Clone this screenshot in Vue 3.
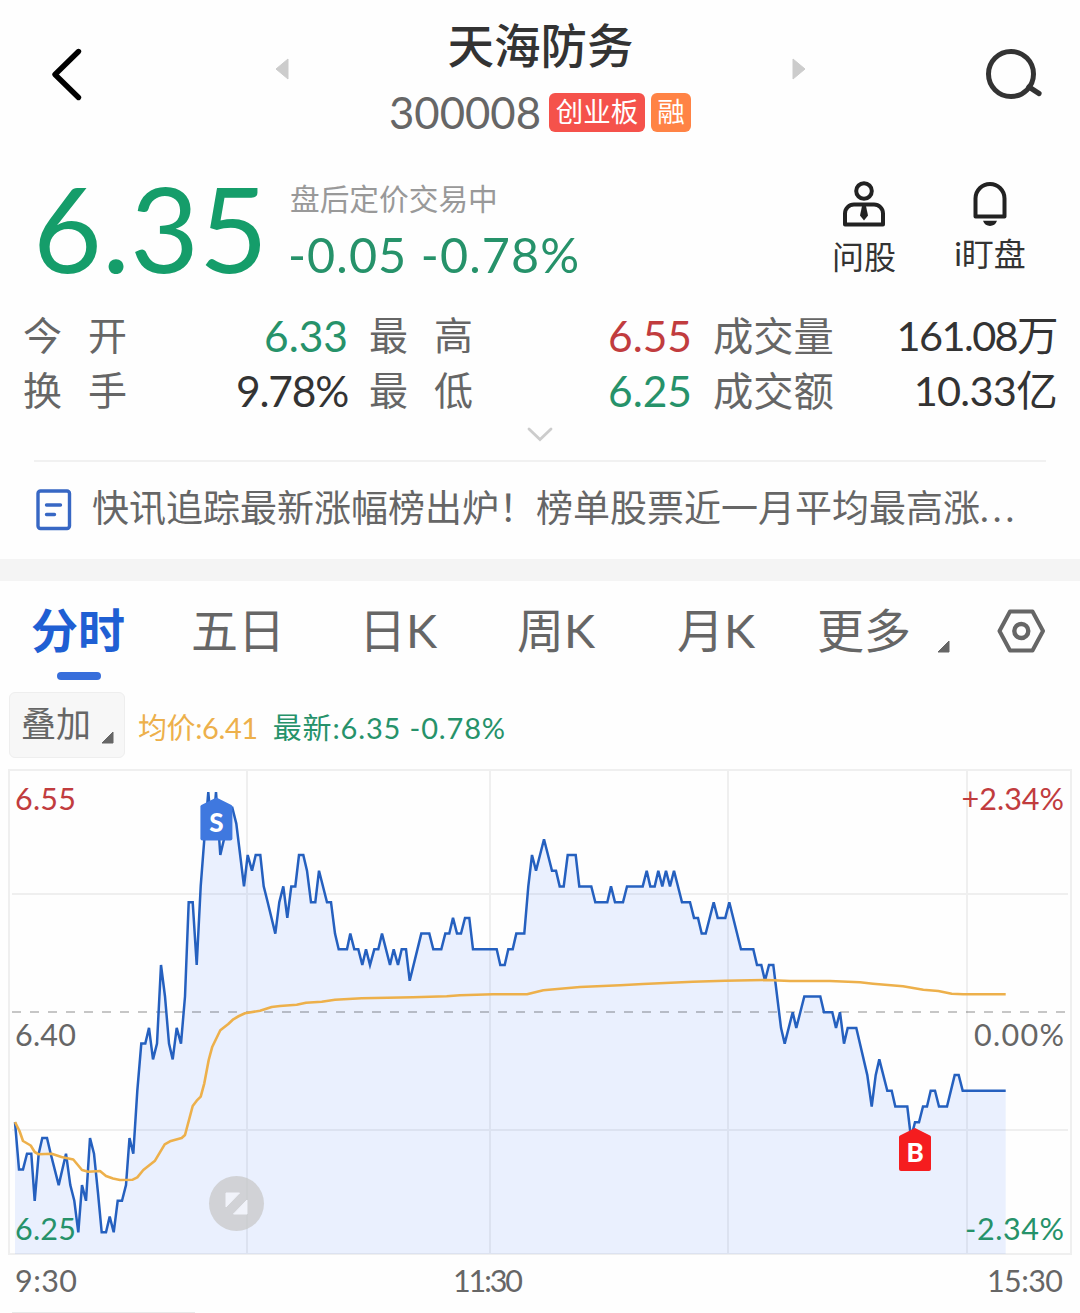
<template>
  <div class="stock-page">
    <header class="header">
      <svg class="icon-back" width="36" height="60" viewBox="0 0 36 60">
        <path d="M31.500 6.500 8 29.500l23.500 23" fill="none" stroke="#000" stroke-width="5.400" stroke-linecap="round" stroke-linejoin="round" />
      </svg>
      <svg class="icon-prev" width="14" height="22" viewBox="0 0 14 22">
        <path d="M13 1v20L1 11z" fill="#ccc" stroke="#ccc" stroke-linejoin="round" />
      </svg>
      <div class="title">
        <h1 class="name">天海防务</h1>
        <div class="code-row">
          <span class="code">300008</span>
          <span class="tag red">创业板</span>
          <span class="tag orange">融</span>
        </div>
      </div>
      <svg class="icon-next" width="14" height="22" viewBox="0 0 14 22">
        <path d="M1 1v20l12-10z" fill="#ccc" stroke="#ccc" stroke-linejoin="round" />
      </svg>
      <svg class="icon-search" width="60" height="54" viewBox="0 0 60 54">
        <circle cx="27" cy="27" r="22.500" fill="none" stroke="#333" stroke-width="5" />
        <path d="M45 40 55 46.500" stroke="#333" stroke-width="5.200" stroke-linecap="round" />
      </svg>
    </header>

    <section class="quote">
      <div class="price">6.35</div>
      <div class="change">
        <div class="status">盘后定价交易中</div>
        <div class="diff">-0.05 -0.78%</div>
      </div>
      <div class="action">
        <svg width="44" height="46" viewBox="0 0 44 46" fill="none" stroke="#222" stroke-width="4">
          <circle cx="22" cy="10" r="7.800" />
          <path d="M3 43.500V32.500a9 9 0 0 1 9-9h20a9 9 0 0 1 9 9v11z" stroke-linejoin="round" />
          <path d="M20 25h4l2 9.500-4 5-4-5z" fill="#222" stroke="none" />
        </svg>
        <span>问股</span>
      </div>
      <div class="action watch">
        <svg width="44" height="46" viewBox="0 0 44 46" fill="none" stroke="#222" stroke-width="4">
          <path d="M7.500 35.500V17.500a14.500 14.500 0 0 1 29 0v18z" stroke-linejoin="round" />
          <path d="M15 39.800h14c-1 3.400-4 5.200-7 5.200s-6-1.800-7-5.200z" fill="#222" stroke="none" />
        </svg>
        <span>i盯盘</span>
      </div>
    </section>

    <section class="stats">
      <div v-for="s in stats" :key="s.label" class="stat">
        <span class="stat-label" :class="{ wide: s.label.length === 2 }">{{ s.label }}</span>
        <span class="stat-value" :class="s.tone">{{ s.value }}</span>
      </div>
    </section>

    <div class="expand">
      <svg width="28" height="16" viewBox="0 0 28 16">
        <path d="M3 3l11 10.500L25 3" fill="none" stroke="#ccc" stroke-width="2.800" stroke-linecap="round" />
      </svg>
    </div>

    <div class="news">
      <svg width="36" height="42" viewBox="0 0 36 42" fill="none" stroke="#3767c4" stroke-width="3.400" stroke-linecap="round">
        <rect x="2" y="2" width="31.500" height="37.500" rx="2.500" />
        <path d="M10.500 16h14M10.500 25.500h8" />
      </svg>
      <p>快讯追踪最新涨幅榜出炉！榜单股票近一月平均最高涨<span class="dots">...</span></p>
    </div>

    <nav class="tabs">
      <span v-for="(tab, i) in tabs" :key="tab" class="tab" :class="{ active: i === 0 }">{{ tab }}</span>
      <svg class="tab-corner" width="13" height="13" viewBox="0 0 13 13">
        <path d="M12 1v11H1z" fill="#666" stroke="#666" stroke-linejoin="round" />
      </svg>
      <svg class="tab-setting" width="48" height="46" viewBox="0 0 48 46" fill="none" stroke="#666" stroke-linejoin="round">
        <path d="M13 3.500h22.500L46 23 35.500 42.500H13L2.500 23z" stroke-width="4" />
        <circle cx="24.300" cy="23" r="7" stroke-width="4.400" />
      </svg>
    </nav>

    <div class="legend">
      <div class="overlay-btn">
        <span>叠加</span>
        <svg width="13" height="13" viewBox="0 0 13 13">
          <path d="M12 1v11H1z" fill="#666" stroke="#666" stroke-linejoin="round" />
        </svg>
      </div>
      <span class="legend-avg">均价:6.41</span>
      <span class="legend-last">最新:6.35 -0.78%</span>
    </div>

    <svg class="chart" width="1080" height="553" viewBox="0 760 1080 553">
      <g fill="none" stroke="#efefef" stroke-width="2">
        <rect x="9" y="770" width="1062" height="484" />
        <path d="M12 894H1068M12 1130H1068" />
        <path v-for="x in [247, 490, 728, 967]" :key="x" :d="`M${x} 770V1254`" />
      </g>
      <path :d="areaPath" fill="#2b6bff" fill-opacity="0.095" />
      <path d="M12 1012H1065" stroke="#000" stroke-opacity="0.220" stroke-width="2" stroke-dasharray="9 9" />
      <polyline :points="pricePoints" fill="none" stroke="#2560bf" stroke-width="2.500" />
      <polyline :points="avgLine" fill="none" stroke="#edb04b" stroke-width="2.600" stroke-linejoin="round" />

      <text x="15" y="810" class="axis up" textLength="61">6.55</text>
      <text x="15" y="1046" class="axis" textLength="61">6.40</text>
      <text x="15" y="1240" class="axis down" textLength="61">6.25</text>
      <text x="1064" y="810" class="axis up" text-anchor="end">+2.34%</text>
      <text x="1064" y="1046" class="axis" text-anchor="end" textLength="90">0.00%</text>
      <text x="1064" y="1240" class="axis down" text-anchor="end" textLength="99">-2.34%</text>
      <text x="15" y="1292" class="axis" textLength="62">9:30</text>
      <text x="453" y="1292" class="axis" textLength="70">11:30</text>
      <text x="987" y="1292" class="axis" textLength="76">15:30</text>

      <g v-for="m in marks" :key="m.text" :transform="`translate(${m.x} ${m.y})`">
        <path d="M0 0l15 7.500q1 .5 1 1.500v32q0 2-2 2h-28q-2 0-2-2V9q0-1 1-1.500z" :fill="m.color" />
        <text x="0" y="34" class="mark">{{ m.text }}</text>
      </g>

      <circle cx="236.500" cy="1203.500" r="27.500" fill="#c8c8c8" fill-opacity="0.750" />
      <path d="M226 1193h13.500l-13.500 14zM247 1200v14h-13.500z" fill="#f1f3fa" stroke="#f1f3fa" stroke-linejoin="round" />
      <path d="M12 1312.500H195" stroke="#e8e8e8" />
    </svg>
  </div>
</template>

<script setup>
import { computed } from 'vue';

const stats = [
  { label: '今开', value: '6.33', tone: 'down' },
  { label: '最高', value: '6.55', tone: 'up' },
  { label: '成交量', value: '161.08万', tone: 'volume' },
  { label: '换手', value: '9.78%', tone: 'rate' },
  { label: '最低', value: '6.25', tone: 'down' },
  { label: '成交额', value: '10.33亿', tone: 'amount' },
];

const tabs = ['分时', '五日', '日K', '周K', '月K', '更多'];

const marks = [
  { text: 'S', x: 216.4, y: 797.5, color: '#3f78df' },
  { text: 'B', x: 915, y: 1128, color: '#f51d1f' },
];

// [x, ticks away from the 6.40 close]
const prices = [
  [15, -7], [19, -10], [23, -10], [27, -9], [31.3, -9], [34.7, -12], [38.7, -9], [42.3, -8], [47, -8],
  [50.7, -9], [58.7, -11], [66, -9], [70.3, -11], [74.3, -12], [78.3, -14], [82, -11], [86, -12], [90, -8],
  [94, -9], [98, -11.5], [101.7, -14], [106, -14], [109.7, -13], [113.7, -14], [117.7, -12], [122, -12],
  [126, -11], [129.5, -8], [133.3, -9], [137.3, -5], [141.3, -2], [145.3, -2], [149, -1], [153, -3],
  [157, -2], [161, 3], [165, 1], [169, -2], [172.7, -3], [176.7, -1], [181, -2], [185, 1], [188.7, 7],
  [192.7, 7], [196.7, 3], [200.7, 8], [204.3, 11], [208.3, 14], [212.3, 11], [216, 14], [220.3, 10],
  [224, 11], [228.3, 13], [232.3, 13], [236.3, 12], [244, 8], [247.7, 10], [252, 9], [255.7, 10],
  [260.3, 10], [263.7, 8], [267.7, 7], [275.3, 5], [279.3, 7], [283.3, 8], [287.3, 6], [291.3, 8],
  [295.3, 8], [299, 10], [303.3, 10], [307, 9], [311, 7], [315.3, 7], [319, 9], [327, 7], [331, 7],
  [335, 5], [338.7, 4], [347, 4], [350.3, 5], [354.3, 4], [358.3, 4], [362.3, 3], [366, 4], [370, 3],
  [374.3, 4], [378.3, 4], [382, 5], [390, 3], [393.7, 4], [398, 3], [401.7, 4], [406, 4], [409.7, 2],
  [421.3, 5], [429.3, 5], [433.3, 4], [441.3, 4], [445.3, 5], [449.3, 5], [453, 6], [457, 5], [461, 5],
  [465, 6], [469.3, 6], [473, 4], [496.7, 4], [500.3, 3], [504.7, 3], [508.3, 4], [512.7, 4], [516.3, 5],
  [524.3, 5], [528.3, 8], [532, 10], [536, 9], [544, 11], [552, 9], [556, 9], [559.7, 8], [563.7, 8],
  [567.7, 10], [575.7, 10], [579.3, 8], [591.3, 8], [595.3, 7], [607.3, 7], [611, 8], [615, 7], [623, 7],
  [627, 8], [642.7, 8], [646.7, 9], [650.3, 8], [654.7, 8], [658.3, 9], [662.3, 8], [666, 9], [670, 8],
  [674, 9], [682, 7], [690, 7], [694, 6], [698, 6], [701.7, 5], [705.7, 5], [713.7, 7], [717.7, 6],
  [725.3, 6], [729.3, 7], [741, 4], [753.3, 4], [757, 3], [761.3, 3], [765, 2], [769, 3], [773.3, 3],
  [781, -1], [784.7, -2], [792.7, 0], [796.3, -1], [804.3, 1], [820.3, 1], [824, 0], [832.3, 0],
  [836, -1], [840, 0], [844, -2], [847.7, -1], [856.3, -1], [867.3, -4], [871.7, -6], [875.7, -4],
  [879.3, -3], [887.3, -5], [891.7, -5], [895.3, -6], [907.3, -6], [911, -8], [915, -7], [919, -7],
  [923, -6], [927, -6], [930.7, -5], [935, -5], [939, -6], [947, -6], [954.7, -4], [958.7, -4],
  [962.7, -5], [1005.7, -5],
];

const avgLine = `15,1122 19.5,1131 23,1141 30.7,1145.5 34.7,1152 38.7,1154.3 51.7,1153.7 61.5,1157 73.3,1159.5
  82,1170 88.3,1171.7 100,1171 106,1176 113,1178.5 120,1180 132.7,1179.7 137.3,1177.3 143.3,1170 155,1160.7
  164.7,1144.3 170,1141.3 181.7,1138 185,1135 192.7,1106 196.7,1100.7 200.7,1096.7 204.3,1083.3 208.7,1060
  212.3,1046.7 220.3,1030.3 228.3,1024 233.3,1019.3 239,1016 245,1013.3 260,1010.7 271.7,1007 280,1006
  296.7,1004.7 306,1002.7 321.7,1001.7 335,999.7 361.7,998.3 413,997.3 446.7,996.3 460,995.3 493,994.3
  527,994.3 543.3,990.3 580,987 620,985.3 643,984 693,981.7 725,980.7 766.700,980 790,981 830,981 860,982.3
  873,983.7 903,986.3 923.3,989.7 938.3,991 951.7,993.7 963.3,994.3 1005.7,994.3`;

const pricePoints = computed(() =>
  prices.map(([x, ticks]) => `${x},${(1012.2 - ticks * 15.72).toFixed(1)}`).join(' ')
);

const areaPath = computed(() => `M15,1254 L${pricePoints.value} L1005.7,1254 Z`);
</script>

<style>
body {
  background: #fefefe;
}
</style>

<style scoped>
.stock-page {
  width: 1080px;
  height: 1313px;
  overflow: hidden;
  font-family: Lato, 'Noto Sans CJK SC', sans-serif;
  color: #333;
  background: #fefefe;
}

svg {
  display: block;
  flex: none;
}

.header {
  display: flex;
  align-items: flex-start;
  height: 160px;
}

.icon-back {
  margin: 45px 0 0 47px;
}

.icon-prev {
  margin: 58px 0 0 192px;
}

.title {
  width: 303px;
  margin-left: 100px;
}

.name {
  margin: 0;
  padding-top: 15px;
  font-size: 46.500px;
  line-height: 60px;
  font-weight: 500;
  text-align: center;
  color: #333;
  white-space: nowrap;
}

.code-row {
  display: flex;
  align-items: center;
  margin-top: 18px;
  height: 39px;
}

.code {
  width: 160px;
  font-size: 43.700px;
  line-height: 39px;
  color: #666;
}

.tag {
  width: 96px;
  height: 39px;
  border-radius: 6px;
  font-size: 27.500px;
  line-height: 38px;
  text-align: center;
  color: #fff;
}

.tag.red {
  background: #f5524b;
}

.tag.orange {
  width: 40px;
  margin-left: 6px;
  background: #ff8345;
}

.icon-next {
  margin: 58px 0 0 100px;
}

.icon-search {
  margin: 47px 0 0 178px;
}

.quote {
  display: flex;
  height: 148px;
}

.price {
  width: 257px;
  padding-left: 33px;
  font-size: 119px;
  line-height: 135px;
  color: #159d6a;
}

.change {
  width: 541px;
}

.status {
  margin-top: 22px;
  font-size: 29.700px;
  line-height: 34px;
  color: #999;
}

.diff {
  margin-top: 8px;
  margin-left: -2px;
  font-size: 48.500px;
  line-height: 60px;
  letter-spacing: 1.100px;
  color: #26926a;
}

.action {
  display: flex;
  flex-direction: column;
  align-items: center;
  width: 66px;
  padding-top: 21px;
  font-size: 32px;
  line-height: 36px;
  white-space: nowrap;
}

.action span {
  margin-top: 12px;
}

.watch {
  width: 80px;
  margin-left: 53px;
}

.watch span {
  margin-top: 9px;
}

.stats {
  display: grid;
  grid-template-columns: 325px 323px 344px;
  column-gap: 21px;
  padding-left: 23px;
}

.stat {
  display: flex;
  justify-content: space-between;
  height: 55px;
  line-height: 55px;
  white-space: nowrap;
}

.stat-label {
  font-size: 40.300px;
  color: #666;
}

.stat-label.wide {
  font-size: 39px;
  letter-spacing: 26px;
}

.stat-value {
  font-size: 42.500px;
}

.stat-value.rate {
  letter-spacing: -1.200px;
}

.stat-value.volume {
  font-size: 41.500px;
  letter-spacing: -1.600px;
}

.stat-value.amount {
  font-size: 41.500px;
  letter-spacing: -0.700px;
}

.up {
  color: #c13c3e;
  fill: #c13c3e;
}

.down {
  color: #26926a;
  fill: #26926a;
}

.expand {
  display: flex;
  justify-content: center;
  height: 42px;
  padding-top: 8px;
  box-sizing: border-box;
}

.news {
  display: flex;
  align-items: center;
  gap: 20px;
  margin: 0 34px;
  padding: 0 0 0 2px;
  height: 97px;
  border-top: 2px solid #f1f1f1;
  font-size: 37px;
  line-height: 90px;
  color: #666;
  white-space: nowrap;
}

.news p {
  margin: -6px 0 0;
}

.news svg {
  margin-top: -1px;
}

.dots {
  letter-spacing: 4px;
}

.tabs {
  display: flex;
  height: 105px;
  padding-left: 31px;
  border-top: 22px solid #f4f4f4;
  font-size: 47px;
  line-height: 98px;
  color: #666;
  white-space: nowrap;
}

.tab {
  width: 160px;
}

.tab:nth-child(2) {
  width: 168px;
}

.tab:nth-child(3) {
  width: 158px;
}

.tab:nth-child(5) {
  width: 140px;
}

.tab:nth-child(6) {
  width: 120px;
}

.tab.active {
  position: relative;
  font-weight: 700;
  color: #1f5fd3;
}

.tab.active::after {
  content: '';
  position: absolute;
  left: 26px;
  top: 91px;
  width: 44px;
  height: 8px;
  border-radius: 4px;
  background: #376edb;
}

.tab-corner {
  margin-top: 59px;
}

.tab-setting {
  margin: 27px 0 0 47px;
}

.legend {
  display: flex;
  align-items: center;
  height: 74px;
  padding: 3px 0 0 9px;
  box-sizing: border-box;
  font-size: 29px;
  line-height: 40px;
  white-space: nowrap;
}

.overlay-btn {
  display: flex;
  box-sizing: border-box;
  width: 116px;
  height: 66px;
  padding: 0 0 4px 11px;
  align-items: center;
  gap: 10px;
  border: 1px solid #eee;
  border-radius: 6px;
  background: #f7f7f7;
  font-size: 35px;
  color: #666;
}

.overlay-btn svg {
  margin-top: 29px;
}

.legend-avg {
  margin: 6px 0 0 13px;
  letter-spacing: -0.400px;
  color: #edb04b;
}

.legend-last {
  margin: 6px 0 0 15px;
  letter-spacing: 0.850px;
  color: #26926a;
}

.axis {
  font-size: 30.500px;
}

.axis:not(.up):not(.down) {
  fill: #666;
}

.mark {
  font-size: 26px;
  font-weight: 900;
  text-anchor: middle;
  fill: #fff;
}
</style>
